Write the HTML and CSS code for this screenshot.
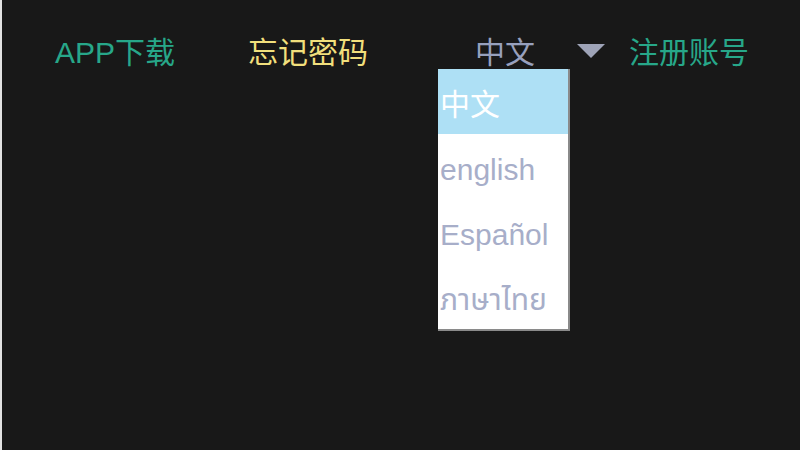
FILE: index.html
```html
<!DOCTYPE html>
<html lang="zh-CN">
<head>
<meta charset="utf-8">
<title>Header</title>
<link rel="stylesheet" href="styles.css">
</head>
<body>
<div class="page">
  <nav class="topbar">
    <a class="link link-app">APP下载</a>
    <a class="link link-forgot">忘记密码</a>
    <div class="lang">
      <div class="lang-current">中文</div>
      <ul class="lang-menu">
        <li class="lang-item is-active">中文</li>
        <li class="lang-item">english</li>
        <li class="lang-item">Español</li>
        <li class="lang-item">ภาษาไทย</li>
      </ul>
    </div>
    <span class="caret"></span>
    <a class="link link-register">注册账号</a>
  </nav>
</div>
</body>
</html>
```
FILE: styles.css
```css
html, body {
  margin: 0;
  padding: 0;
  background: #181818;
}
.page {
  box-sizing: border-box;
  min-height: 450px;
  border-left: 2px solid #e2e2e2;
  background: #181818;
  font-family: "Liberation Sans", "Noto Sans CJK SC", "Noto Sans Thai", "DejaVu Sans", sans-serif;
  font-size: 30px;
}
.topbar {
  display: flex;
  align-items: center;
  padding: 37px 0 0 53px;
  line-height: 32px;
}
.link {
  text-decoration: none;
  white-space: nowrap;
}
.link-app {
  color: #27a789;
}
.link-forgot {
  margin-left: 73px;
  color: #f1df7c;
}
.lang {
  position: relative;
  margin-left: 70px;
  width: 132px;
}
.lang-current {
  text-align: center;
  color: #97a0bd;
  padding-left: 2px;
}
.lang-menu {
  position: absolute;
  top: 100%;
  left: 0;
  width: 130px;
  margin: 0;
  padding: 0;
  list-style: none;
  background: #ffffff;
  border-right: 2px solid #8a8a8a;
  border-bottom: 2px solid #8a8a8a;
}
.lang-item {
  height: 62px;
  line-height: 65px;
  padding: 3px 0 0 2px;
  overflow: hidden;
  color: #a7aec9;
  white-space: nowrap;
}
.lang-item.is-active {
  background: #aee0f5;
  color: #ffffff;
}
.caret {
  width: 0;
  height: 0;
  margin-left: 7px;
  margin-top: -4px;
  border-left: 14px solid transparent;
  border-right: 14px solid transparent;
  border-top: 14px solid #9ea3b7;
}
.link-register {
  margin-left: 24px;
  color: #27a789;
}
```
